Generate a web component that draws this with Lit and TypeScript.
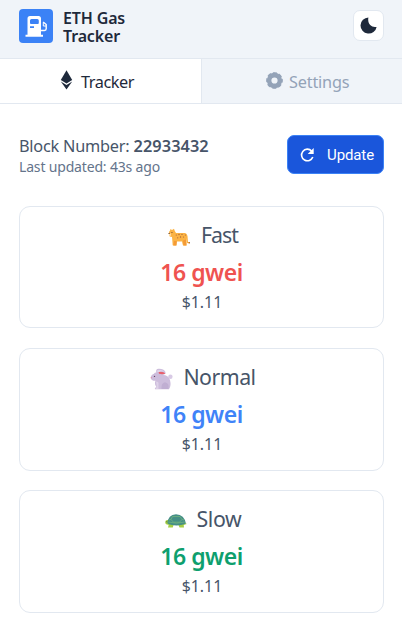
import { LitElement, html, css, svg } from "lit";
import { customElement } from "lit/decorators.js";

const leopard = svg`
  <path d="M4 9 Q1 9 1 6.5 L1 4 L2 2.5 L2.5 1 L4 2 L6 .8 L6.8 3 L8 5 L17 5 Q19 5.5 19.5 8 L20 14 L22 14 L21.5 15.5 L19 15 L18 10 L18 17 L15 17 L14 12 L8 12 L7.5 17 L4.8 17 Z" fill="#fbb344"/>
  <path d="M5 6 H16 Q18.5 7 18.5 12 V17.5 H15 L14.3 13.5 H9 L8.4 17.5 H4.8Z" fill="#fbb344"/>
  <path d="M6 13 h2.6 l-.2 4.5 h-3z M15 12.5 l3 -1 .5 6 h-3z" fill="#f49a36"/>
  <path d="M.7 5.6 h2.2 v2.2 h-1.7z" fill="#ffe0ae"/>
  <path d="M.5 5 h1.2 v1 H.5z M3.5 4 h.9 v1 h-.9z" fill="#69422f"/>
  <g fill="#a8653b"><circle cx="8.3" cy="7" r=".6"/><circle cx="11" cy="6.5" r=".7"/><circle cx="14" cy="6.4" r=".6"/><circle cx="12.5" cy="9" r=".7"/><circle cx="15.5" cy="9" r=".6"/><circle cx="9.7" cy="9.8" r=".6"/><circle cx="17.4" cy="7" r=".6"/><circle cx="21.3" cy="14.7" r=".7"/></g>`;

const rabbit = svg`
  <circle cx="20.4" cy="8.8" r="2.2" fill="#d8cae5"/>
  <path d="M.8 10 Q.6 7 4 5.8 Q4.5 4.5 6.2 4.5 Q5.5 1 8.5 .8 Q13.5 .5 15.5 4 Q16 6.5 12 7 Q18 6.5 20 12 Q21.5 18 19 21.3 L5 21.3 Q4 20 6.5 19 Q4 16 5.5 12.8 Q1.2 13 .8 10Z" fill="#cdbddc"/>
  <path d="M8.5 4 Q13 3.2 15.6 5.4 Q13 6.8 9 5.8Z" fill="#e8606c"/>
  <path d="M6.3 3 Q10 .5 15 3.7 Q11 2.8 8.5 4.2Z" fill="#e2d7eb"/>
  <path d="M11.5 21 Q11 15 15 14.3 Q19.5 15 18.5 21Z" fill="#c0aed2"/>
  <path d="M6 13.5 Q9 13.5 8.5 16 L8.5 21 H5.5 L6.8 18.8Z" fill="#ded2e8"/>
  <circle cx="4.5" cy="8.4" r=".7" fill="#674665"/><circle cx="1.3" cy="9.7" r=".6" fill="#e58ba5"/>`;

const turtle = svg`
  <path d="M.2 8 Q.4 5.8 2.7 6 L5 8 L19 8 L21.8 10 L18.7 11 L19 13.5 H14.5 L13.5 11 H8.5 L7.8 13.5 H3 L3.7 10.7 Q.2 11 .2 8Z" fill="#a5cf43"/>
  <path d="M2.4 9.3 Q3 1 11 .3 Q19.4 1 20.8 9.3 Q18 11.4 11.5 11.4 Q5 11.4 2.4 9.3Z" fill="#458f86"/>
  <path d="M3.3 8 Q11.5 10.4 19.8 8 M7.5 2.5 H15 L17 5.5 L14.5 8.2 H8.5 L6 5.5Z M6 5.5 L4 6 M17 5.5 L19 6" fill="none" stroke="#76b77c" stroke-width=".7"/>
  <circle cx="1.8" cy="7.8" r=".5" fill="#42522b"/>`;

const speeds = [
  { name: "Fast", tone: "fast", icon: leopard, w: 23, h: 18 },
  { name: "Normal", tone: "normal", icon: rabbit, w: 23, h: 22 },
  { name: "Slow", tone: "slow", icon: turtle, w: 22, h: 14 },
];

@customElement("app-root")
export class AppRoot extends LitElement {
  static styles = css`
    :host { display: block; height: 627px; overflow: hidden; background: #fff; color: #475569; font-family: "Noto Sans", "Open Sans", sans-serif; }
    * { box-sizing: border-box; }
    svg { display: block; flex: none; }
    .header { height: 59px; padding: 0 18px 7px 19px; display: flex; align-items: center; background: #f0f4f9; border-bottom: 1px solid #e2e8f0; color: #1e293b; }
    .logo { width: 34px; height: 34px; border-radius: 4px; background: #3b82f6; }
    .title { margin: 2px auto 0 10px; width: 80px; font-size: 16px; line-height: 18px; font-weight: 600; letter-spacing: -.15px; }
    .theme { width: 31px; height: 31px; border: 1px solid #e2e8f0; border-radius: 7px; background: #fff; display: grid; place-items: center; }
    .tabs { height: 45px; display: grid; grid-template-columns: 201px 1fr; border-bottom: 1px solid #e2e8f0; font-size: 16.3px; }
    .tab { display: flex; align-items: center; color: #1e293b; }
    .tracker { padding-left: 60px; gap: 8px; letter-spacing: -.45px; }
    .settings { padding-left: 64px; gap: 6px; background: #f0f4f9; border-left: 1px solid #e2e8f0; color: #94a3b8; letter-spacing: -.2px; }
    .tab span { margin-top: 1px; }
    .tab svg { margin-bottom: 2px; }
    .main { padding: 31px 18px 0 19px; }
    .status { height: 39px; display: flex; justify-content: space-between; align-items: flex-start; }
    .block { font-size: 16.3px; line-height: 22px; letter-spacing: -.22px; white-space: nowrap; }
    .block b { font-weight: 600; letter-spacing: .1px; }
    .updated { font-size: 14px; line-height: 20px; letter-spacing: -.17px; color: #64748b; }
    .update { width: 97px; height: 39px; padding: 0 0 0 11px; display: flex; align-items: center; gap: 12px; border: 1px solid #3b82f6; border-radius: 7px; background: #1a56db; color: #fff; font: 400 15px Roboto, sans-serif; }
    .update span { letter-spacing: -.1px; }
    .cards { margin-top: 32px; display: grid; gap: 19.8px; }
    .card { height: 122.4px; border: 1px solid #e2e8f0; border-radius: 11px; display: flex; flex-direction: column; align-items: center; padding-top: 11px; }
    .name { height: 32px; padding-left: 3px; display: flex; align-items: center; gap: 10px; font-size: 21.3px; letter-spacing: -.5px; }
    .name svg { margin-top: 5px; }
    .fast .name { letter-spacing: -1px; }
    .slow .name { letter-spacing: -.35px; }
    .gwei { height: 43px; line-height: 45px; font-size: 23px; font-weight: 600; letter-spacing: -.45px; }
    .fast .gwei { color: #ef5350; }
    .normal .gwei { color: #3f83f8; }
    .slow .gwei { color: #0e9f6e; }
    .price { line-height: 18px; font-size: 15.8px; padding-left: 1px; }
  `;

  render() {
    return html`
      <header class="header">
        <svg class="logo" viewBox="0 0 34 34">
          <path fill-rule="evenodd" fill="#fff" d="M8.5 9.5 Q8.5 7 11 7 H19.5 Q22 7 22 9.5 V25.8 H24 V27.8 H6.5 V25.8 H8.5Z M12.5 10 Q11 10 11 11.5 V14 Q11 15 12 15 H18.8 Q19.8 15 19.8 14 V11.5 Q19.8 10 18.3 10Z M11 17.2 H15 V19 H11Z"/>
          <path d="M22 21.5 H25.5 Q27.2 21.5 27.2 19.8 V15.5 L24.2 13" fill="none" stroke="#fff" stroke-width="1.4"/>
          <path d="M24.3 13.4 V17 H27" fill="none" stroke="#fff" stroke-width="1"/>
        </svg>
        <div class="title">ETH Gas Tracker</div>
        <div class="theme"><svg width="17" height="17" viewBox="0 0 17 17"><path d="M8.4 .4 A8.1 8.1 0 1 0 16.6 9.9 C11.8 11 7.1 7.2 8.4 .4Z" fill="#1e293b"/></svg></div>
      </header>
      <nav class="tabs">
        <div class="tab tracker">
          <svg width="13" height="20" viewBox="0 0 13 20" fill="#1e293b"><path d="M6.5 .3 L12.2 10 L6.5 13.4 L.8 10Z"/><path d="M.8 11.5 L6.5 15 L12.2 11.5 L6.5 19.5Z"/></svg>
          <span>Tracker</span>
        </div>
        <div class="tab settings">
          <svg width="17" height="17" viewBox="0 0 17 17" fill="none" stroke="#94a3b8"><circle cx="8.5" cy="8.5" r="5.4" stroke-width="4.6"/><circle cx="8.5" cy="8.5" r="7.6" stroke-width="1.5" stroke-dasharray="3.97 2" stroke-dashoffset="1.85"/></svg>
          <span>Settings</span>
        </div>
      </nav>
      <main class="main">
        <section class="status">
          <div>
            <div class="block">Block Number: <b>22933432</b></div>
            <div class="updated">Last updated: 43s ago</div>
          </div>
          <div class="update">
            <svg width="16" height="16" viewBox="0 0 16 16"><path d="M12.6 4 A5.8 5.8 0 1 0 13.8 10" fill="none" stroke="#fff" stroke-width="1.6"/><path d="M14.7 1 V7 H8.7Z" fill="#fff"/></svg>
            <span>Update</span>
          </div>
        </section>
        <section class="cards">
          ${speeds.map((s) => html`
            <article class="card ${s.tone}">
              <div class="name"><svg width=${s.w} height=${s.h} viewBox="0 0 ${s.w} ${s.h}">${s.icon}</svg><span>${s.name}</span></div>
              <div class="gwei">16 gwei</div>
              <div class="price">$1.11</div>
            </article>`)}
        </section>
      </main>`;
  }
}
